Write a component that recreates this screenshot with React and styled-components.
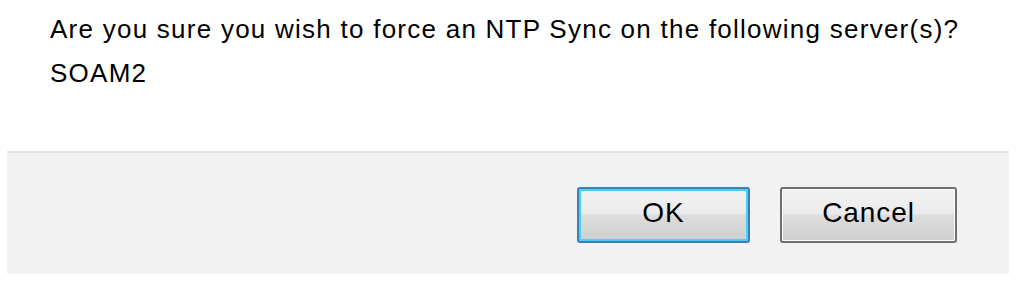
import styled, { createGlobalStyle } from 'styled-components'

const GlobalStyle = createGlobalStyle`
  html, body {
    margin: 0;
    padding: 0;
    background: #ffffff;
  }
  body {
    font-family: "Liberation Sans", Arial, sans-serif;
    color: #000000;
  }
`

const Dialog = styled.div`
  width: 1002px;
  margin: 0 7px;
  display: flex;
  flex-direction: column;
`

const Message = styled.div`
  padding: 7px 0 56px 43px;
  font-size: 26px;
  line-height: 44px;
  letter-spacing: 1.25px;
`

const Footer = styled.div`
  background: #f2f2f2;
  border-top: 2px solid #e3e3e3;
  box-sizing: border-box;
  height: 123px;
  padding: 34px 52px 0 0;
  display: flex;
  justify-content: flex-end;
  align-items: flex-start;
  gap: 30px;
`

const Button = styled.button`
  width: ${p => p.$width}px;
  height: 56px;
  box-sizing: border-box;
  border-radius: 3px;
  border: 2px solid ${p => (p.$focused ? '#3c7fb1' : '#707070')};
  box-shadow: inset 0 0 0 ${p => (p.$focused ? '2px #48d0f8' : '1px #fcfcfc')};
  background: linear-gradient(to bottom, #f2f2f2 0%, #ebebeb 48%, #dddddd 50%, #cfcfcf 100%);
  font-family: "Liberation Sans", Arial, sans-serif;
  font-size: 28px;
  letter-spacing: 0.9px;
  color: #000000;
  padding: 0 0 5px 0;
  cursor: pointer;
`

export default function App() {
  return (
    <>
      <GlobalStyle />
      <Dialog>
        <Message>
          Are you sure you wish to force an NTP Sync on the following server(s)?
          <br />
          SOAM2
        </Message>
        <Footer>
          <Button $width={173} $focused>OK</Button>
          <Button $width={177}>Cancel</Button>
        </Footer>
      </Dialog>
    </>
  )
}
